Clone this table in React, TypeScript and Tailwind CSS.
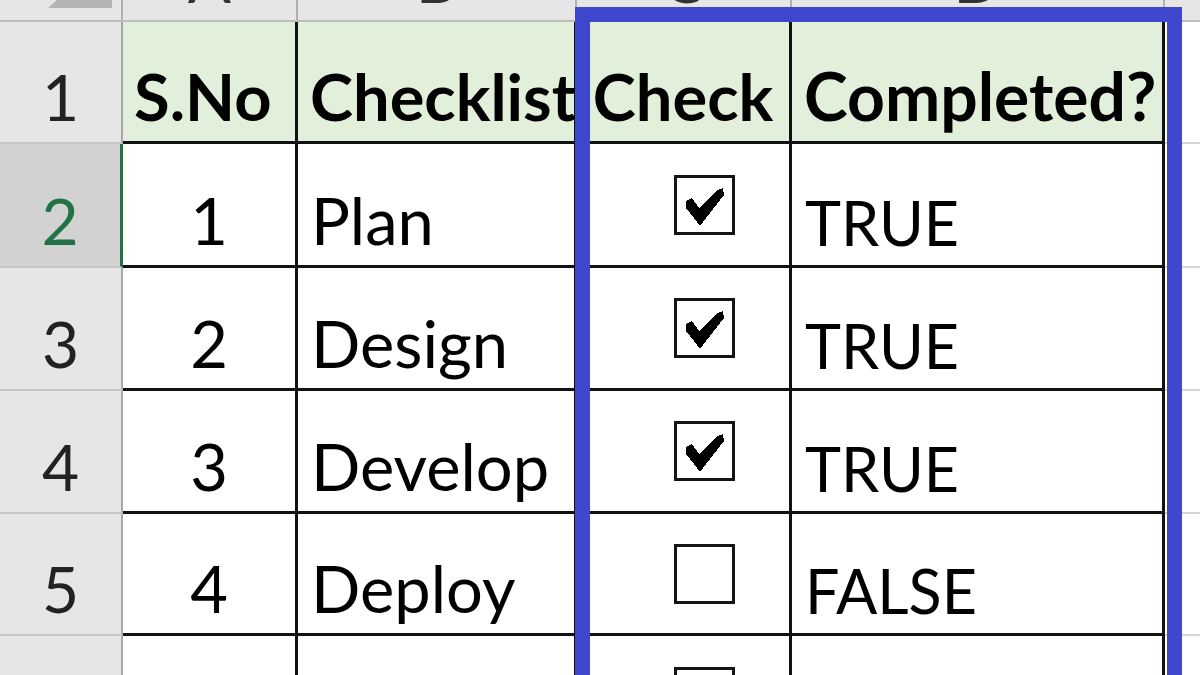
const ROWS = [
  { n: 2, sno: "1", item: "Plan", checked: true, done: "TRUE", h: "h-[124px]", active: true },
  { n: 3, sno: "2", item: "Design", checked: true, done: "TRUE", h: "h-[123px]" },
  { n: 4, sno: "3", item: "Develop", checked: true, done: "TRUE", h: "h-[123px]" },
  { n: 5, sno: "4", item: "Deploy", checked: false, done: "FALSE", h: "h-[122px]" },
  { n: 6, sno: "", item: "", checked: false, done: "", h: "h-[124px]" },
];

function CheckBox({ checked }: { checked: boolean }) {
  return (
    <div className="w-[61px] h-[60px] border-[3px] border-[#151515] bg-white">
      {checked && (
        <svg viewBox="0 0 55 54" className="block w-[55px] h-[54px]" shapeRendering="crispEdges">
          <path d="M9 23 L15 20 L22 30 L40 12 L46 10 L47 17 L29 40 L23 48 L17 40 L9 30 Z" fill="#000" />
        </svg>
      )}
    </div>
  );
}

export default function App() {
  return (
    <div className="relative w-[1200px] h-[675px] overflow-hidden bg-white font-['Lato',sans-serif] text-black">
      {/* column letters strip */}
      <div className="flex h-[22px] bg-[#e6e6e6] border-b-2 border-[#bdbdbd]">
        <div className="w-[123px] shrink-0 border-r-2 border-[#b0b0b0] relative overflow-hidden">
          <svg className="absolute left-0 top-0" width="121" height="20" viewBox="0 0 121 20">
            <polygon points="57,0 112,0 112,8 48,8" fill="#b4b4b4" />
          </svg>
        </div>
        {[
          ["A", "w-[175px]"],
          ["B", "w-[279px]"],
          ["C", "w-[215px]"],
          ["D", "w-[373px]"],
        ].map(([l, w]) => (
          <div key={l} className={`${w} shrink-0 border-r-2 border-[#b0b0b0] overflow-hidden flex items-end justify-center pb-[9px]`}>
            <span className="text-[64px] leading-none text-[#333]">{l}</span>
          </div>
        ))}
        <div className="flex-1" />
      </div>

      {/* header row */}
      <div className="flex h-[122px]">
        <div className="w-[123px] shrink-0 bg-[#e6e6e6] border-r-2 border-b-2 border-r-[#a8a8a8] border-b-[#c6c6c6] flex items-end justify-center pb-[13px]">
          <span className="text-[64px] leading-none text-[#222]">1</span>
        </div>
        <div className="w-[175px] shrink-0 bg-[#e2efda] border-r-[3px] border-b-[3px] border-[#111] flex items-end pl-[11px] pb-[12px]">
          <span className="text-[65px] leading-none font-bold">S.No</span>
        </div>
        <div className="w-[279px] shrink-0 bg-[#e2efda] border-r-[3px] border-b-[3px] border-[#111] flex items-end pl-[12px] pb-[12px]">
          <span className="text-[65px] leading-none font-bold">Checklist</span>
        </div>
        <div className="w-[215px] shrink-0 bg-[#e2efda] border-r-[3px] border-b-[3px] border-[#111] flex items-end justify-center pb-[12px]">
          <span className="text-[65px] leading-none font-bold">Check</span>
        </div>
        <div className="w-[373px] shrink-0 bg-[#e2efda] border-r-[3px] border-b-[3px] border-[#111] flex items-end pl-[12px] pb-[12px]">
          <span className="text-[66px] leading-none font-bold whitespace-nowrap">Completed?</span>
        </div>
        <div className="flex-1 border-b-2 border-[#d6d6d6]" />
      </div>

      {/* data rows */}
      {ROWS.map((r) => (
        <div key={r.n} className={`flex ${r.h}`}>
          <div
            className={`w-[123px] shrink-0 border-b-2 border-b-[#c6c6c6] flex items-end justify-center pb-[13px] ${
              r.active ? "bg-[#d2d2d2] border-r-[3px] border-r-[#217346]" : "bg-[#e6e6e6] border-r-2 border-r-[#a8a8a8]"
            }`}
          >
            <span className={`text-[64px] leading-none ${r.active ? "text-[#217346]" : "text-[#222]"}`}>{r.n}</span>
          </div>
          <div className="w-[175px] shrink-0 border-r-[3px] border-b-[3px] border-[#111] flex items-end justify-center pb-[12px]">
            <span className="text-[65px] leading-none">{r.sno}</span>
          </div>
          <div className="w-[279px] shrink-0 border-r-[3px] border-b-[3px] border-[#111] flex items-end pl-[13px] pb-[12px]">
            <span className="text-[65px] leading-none">{r.item}</span>
          </div>
          <div className="w-[215px] shrink-0 border-r-[3px] border-b-[3px] border-[#111] flex items-center pl-[97px]">
            <CheckBox checked={r.checked} />
          </div>
          <div className="w-[373px] shrink-0 border-r-[3px] border-b-[3px] border-[#111] flex items-end pl-[13px] pb-[12px]">
            <span className="text-[61px] leading-none">{r.done}</span>
          </div>
          <div className="flex-1 border-b-2 border-[#d6d6d6]" />
        </div>
      ))}

      {/* highlight frame drawn over columns C:D */}
      <div className="absolute left-[575px] top-[7px] w-[607px] h-[720px] border-[15px] border-[#3f48cc] pointer-events-none" />
    </div>
  );
}
